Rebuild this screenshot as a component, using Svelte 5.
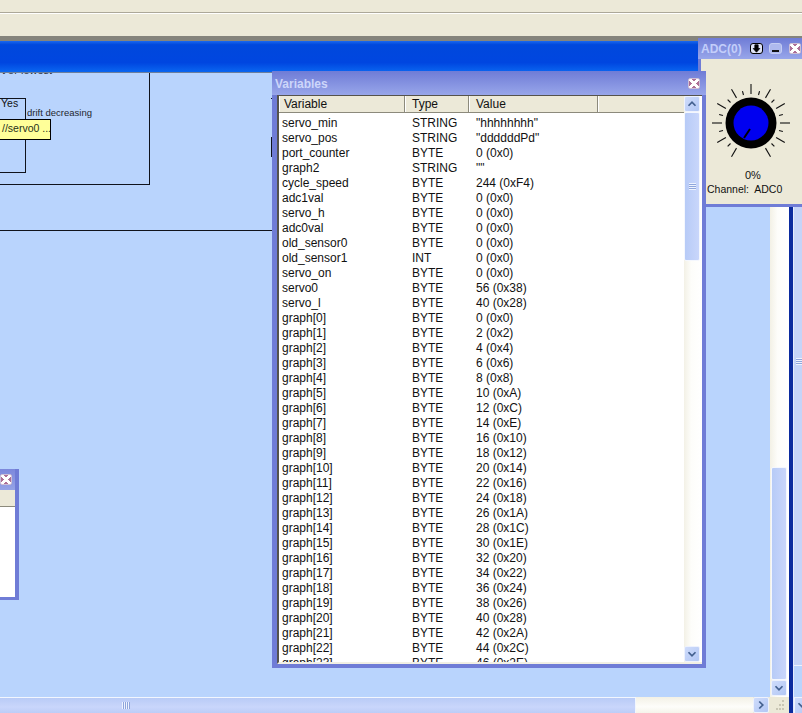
<script>
    const vars = [
        ["servo_min", "STRING", '"hhhhhhhh"'],
        ["servo_pos", "STRING", '"ddddddPd"'],
        ["port_counter", "BYTE", "0 (0x0)"],
        ["graph2", "STRING", '""'],
        ["cycle_speed", "BYTE", "244 (0xF4)"],
        ["adc1val", "BYTE", "0 (0x0)"],
        ["servo_h", "BYTE", "0 (0x0)"],
        ["adc0val", "BYTE", "0 (0x0)"],
        ["old_sensor0", "BYTE", "0 (0x0)"],
        ["old_sensor1", "INT", "0 (0x0)"],
        ["servo_on", "BYTE", "0 (0x0)"],
        ["servo0", "BYTE", "56 (0x38)"],
        ["servo_l", "BYTE", "40 (0x28)"],
    ];
    // graph[n] holds 2*n
    for (let i = 0; i < 24; i++) {
        const v = i * 2;
        vars.push([`graph[${i}]`, "BYTE", `${v} (0x${v.toString(16).toUpperCase()})`]);
    }

    // dial ticks, every 15 degrees, long ones on the 30s
    const ticks = [];
    for (let a = -150; a <= 150; a += 15) {
        const r = (a * Math.PI) / 180;
        const outer = a % 30 === 0 ? 39 : 33;
        ticks.push({
            x1: 52 + 29 * Math.sin(r),
            y1: 65 - 29 * Math.cos(r),
            x2: 52 + outer * Math.sin(r),
            y2: 65 - outer * Math.cos(r),
        });
    }
</script>

<div class="app">
    <div class="toolbar top"></div>
    <div class="toolbar second"></div>
    <div class="title-strip"></div>

    <div class="workspace">
        <div class="main">
            <div class="upper">
                <div class="canvas">
                    <div class="clipped-note">t or lowest</div>
                    <div class="box-outer"></div>
                    <div class="box-inner"><span>Yes</span></div>
                    <div class="drift">drift decreasing</div>
                    <div class="comment">//servo0 ...</div>
                    <div class="rule"></div>
                    <div class="behind-a"></div>
                    <div class="behind-b"></div>

                    <div class="mini-window">
                        <div class="mini-title">
                            <span class="close"></span>
                        </div>
                        <div class="mini-head"></div>
                        <div class="mini-body"></div>
                    </div>
                </div>

                <div class="vscroll">
                    <div class="vtrack">
                        <div class="vthumb"></div>
                    </div>
                    <div class="sbtn">
                        <svg viewBox="0 0 16 16"><path d="M4 6 L8 10 L12 6" /></svg>
                    </div>
                </div>
            </div>

            <div class="hscroll">
                <div class="hthumb"><span class="grip-v"></span></div>
                <div class="htrack"></div>
                <div class="sbtn h">
                    <svg viewBox="0 0 16 16"><path d="M6 4 L10 8 L6 12" /></svg>
                </div>
                <div class="corner">
                    <svg viewBox="0 0 19 16">
                        <rect x="13" y="3" width="2" height="2" />
                        <rect x="10" y="7" width="2" height="2" />
                        <rect x="13" y="7" width="2" height="2" />
                        <rect x="7" y="11" width="2" height="2" />
                        <rect x="10" y="11" width="2" height="2" />
                        <rect x="13" y="11" width="2" height="2" />
                    </svg>
                </div>
            </div>
        </div>

        <div class="divider"></div>

        <div class="side">
            <div class="side-thumb"><span class="grip-h"></span></div>
            <div class="side-gap"></div>
            <div class="side-btn">
                <svg viewBox="0 0 16 16"><path d="M4 6 L8 10 L12 6" /></svg>
            </div>
        </div>
    </div>

    <div class="adc">
        <div class="adc-title">
            <span class="adc-name">ADC(0)</span>
            <span class="adc-btn pin">
                <svg viewBox="0 0 13 11"><path d="M6.5 10 L2.5 5.5 H4.5 V1 H8.5 V5.5 H10.5 Z" /></svg>
            </span>
            <span class="adc-btn min"><i></i></span>
            <span class="close"></span>
        </div>
        <div class="adc-body">
            <svg class="dial" width="104" height="130" viewBox="0 0 104 130">
                {#each ticks as t}
                    <line x1={t.x1} y1={t.y1} x2={t.x2} y2={t.y2} />
                {/each}
                <circle cx="52" cy="65" r="25.5" fill="#000" />
                <circle cx="52" cy="65" r="17.5" fill="#0000f0" />
                <line class="pointer" x1="51" y1="71" x2="45" y2="80" />
            </svg>
            <div class="percent">0%</div>
            <div class="channel">Channel:&nbsp; ADC0</div>
        </div>
    </div>

    <div class="vars">
        <div class="vars-title">
            <span>Variables</span>
            <span class="close"></span>
        </div>
        <div class="vars-inner">
            <div class="list">
                <div class="head">
                    <div class="col c1">Variable</div>
                    <div class="col c2">Type</div>
                    <div class="col c3">Value</div>
                    <div class="col c4"></div>
                </div>
                <div class="rows">
                    {#each vars as row}
                        <div class="row">
                            <span class="c1">{row[0]}</span>
                            <span class="c2">{row[1]}</span>
                            <span class="c3">{row[2]}</span>
                        </div>
                    {/each}
                </div>
            </div>
            <div class="list-scroll">
                <div class="sbtn">
                    <svg viewBox="0 0 16 16"><path d="M4 10 L8 6 L12 10" /></svg>
                </div>
                <div class="list-thumb"><span class="grip-h"></span></div>
                <div class="list-track"></div>
                <div class="sbtn">
                    <svg viewBox="0 0 16 16"><path d="M4 6 L8 10 L12 6" /></svg>
                </div>
            </div>
        </div>
    </div>
</div>

<style>
    :global(body) {
        margin: 0;
        background: #ece9d8;
    }
    .app {
        position: relative;
        width: 802px;
        height: 713px;
        overflow: hidden;
        display: flex;
        flex-direction: column;
        font-family: "Liberation Sans", Arial, sans-serif;
        font-size: 12px;
        color: #111;
    }
    .toolbar {
        background: #ece9d8;
        flex: none;
    }
    .toolbar.top {
        height: 12px;
        border-bottom: 1px solid #aca899;
    }
    .toolbar.second {
        height: 22px;
        border-top: 1px solid #fff;
        border-bottom: 5px solid #85847c;
    }
    .title-strip {
        flex: none;
        height: 31px;
        background: linear-gradient(#1a68ee 0, #0048dc 12%, #0046e0 70%, #0a66f0 100%);
        border-bottom: 1px solid #6d7f9c;
    }
    .workspace {
        flex: 1;
        display: flex;
        min-height: 0;
    }
    .main {
        flex: none;
        width: 789px;
        display: flex;
        flex-direction: column;
    }
    .upper {
        flex: 1;
        display: flex;
        min-height: 0;
    }
    .canvas {
        position: relative;
        width: 770px;
        background: #b9d4fd;
        overflow: hidden;
        flex: none;
    }
    /* diagram shapes on the canvas: y offsets are from 73 */
    .clipped-note {
        position: absolute;
        left: 2px;
        top: -9px;
        font-size: 11px;
        line-height: 13px;
        color: #2b2f3a;
    }
    .box-outer {
        position: absolute;
        left: -2px;
        top: -2px;
        width: 150px;
        height: 112px;
        border: 1px solid #10131c;
    }
    .box-inner {
        position: absolute;
        left: -2px;
        top: 25px;
        width: 26px;
        height: 73px;
        border: 1px solid #10131c;
    }
    .box-inner span {
        position: absolute;
        left: 2px;
        top: -3px;
        font-size: 10.5px;
        line-height: 15px;
    }
    .drift {
        position: absolute;
        left: 27px;
        top: 33px;
        font-size: 9.5px;
        line-height: 14px;
        color: #23272f;
        white-space: nowrap;
    }
    .comment {
        position: absolute;
        left: -1px;
        top: 46px;
        width: 48px;
        height: 19px;
        background: #ffff99;
        border: 1px solid #000;
        font-size: 10.5px;
        line-height: 17px;
        padding-left: 2px;
        color: #26301a;
        white-space: nowrap;
        overflow: hidden;
    }
    .rule {
        position: absolute;
        left: 0;
        top: 157px;
        width: 273px;
        height: 1px;
        background: #10131c;
    }
    .behind-a {
        position: absolute;
        left: 271px;
        top: 25px;
        width: 2px;
        height: 1px;
        background: #10131c;
    }
    .behind-b {
        position: absolute;
        left: 271px;
        top: 64px;
        width: 2px;
        height: 20px;
        background: #10131c;
    }
    .mini-window {
        position: absolute;
        left: -10px;
        top: 396px;
        width: 29px;
        height: 131px;
        background: #6f7cd6;
        box-sizing: border-box;
        border-right: 4px solid #6f7cd6;
        border-bottom: 3px solid #6f7cd6;
        display: flex;
        flex-direction: column;
    }
    .mini-title {
        height: 21px;
        flex: none;
        display: flex;
        justify-content: flex-end;
        align-items: center;
        padding-right: 3px;
        background: linear-gradient(#7c88dc, #95a3e6);
    }
    .mini-head {
        height: 17px;
        flex: none;
        background: #ece9d8;
        border-bottom: 1px solid #8c8a7c;
        box-sizing: border-box;
    }
    .mini-body {
        flex: 1;
        background: #fff;
    }
    .close {
        display: block;
        flex: none;
        width: 12px;
        height: 11px;
        box-sizing: border-box;
        border: 1px solid #cdbfd6;
        border-radius: 2px;
        background-color: #ad6f96;
        background-image:
            linear-gradient(42deg, transparent 40%, #fff 40%, #fff 60%, transparent 60%),
            linear-gradient(-42deg, transparent 40%, #fff 40%, #fff 60%, transparent 60%);
    }
    .vscroll {
        flex: 1;
        display: flex;
        flex-direction: column;
        background: linear-gradient(90deg, #f3f1e6, #fdfdfa 40%, #fff);
    }
    .vtrack {
        flex: 1;
        padding-top: 394px;
        min-height: 0;
        box-sizing: border-box;
    }
    .vthumb {
        height: 100%;
        width: 16px;
        margin-left: 1px;
        box-sizing: border-box;
        border: 1px solid #f4f7fe;
        border-radius: 2px;
        background: linear-gradient(90deg, #b7cbf7, #c9d6fb);
    }
    .sbtn {
        flex: none;
        width: 16px;
        height: 16px;
        box-sizing: border-box;
        border: 1px solid #eef2fd;
        border-radius: 2px;
        background: linear-gradient(135deg, #cfdcfb, #b2c7f5);
    }
    .sbtn svg,
    .side-btn svg {
        display: block;
        width: 14px;
        height: 14px;
    }
    .sbtn path,
    .side-btn path {
        fill: none;
        stroke: #43608f;
        stroke-width: 2;
    }
    .vscroll .sbtn {
        margin: 0 0 1px 1px;
    }
    .divider {
        flex: none;
        width: 4px;
        background: #0a2a9e;
    }
    .side {
        flex: 1;
        display: flex;
        flex-direction: column;
        border-left: 1px solid #e4ebfc;
        background: #b9d4fd;
    }
    .side-thumb {
        flex: none;
        height: 593px;
        box-sizing: border-box;
        padding: 285px 0 0 2px;
        background: #c5d4f8;
        border-bottom: 1px solid #eef2fd;
    }
    .side-gap {
        flex: 1;
    }
    .side-btn {
        flex: none;
        height: 16px;
        background: linear-gradient(135deg, #cfdcfb, #b2c7f5);
        border-top: 1px solid #eef2fd;
        border-left: 1px solid #eef2fd;
        box-sizing: border-box;
    }
    .grip-h {
        display: block;
        width: 7px;
        height: 7px;
        background: repeating-linear-gradient(#eef3fe 0 1px, #8fa6dc 1px 2px);
    }
    .hscroll {
        flex: none;
        height: 16px;
        display: flex;
        background: #ece9d8;
    }
    .hthumb {
        width: 636px;
        flex: none;
        box-sizing: border-box;
        border-top: 1px solid #f2f6fe;
        border-right: 1px solid #f2f6fe;
        background: linear-gradient(#b9cbf6, #c9d6fb 60%, #bccdf7);
        display: flex;
        align-items: center;
        padding-left: 122px;
    }
    .grip-v {
        display: block;
        width: 8px;
        height: 7px;
        background: repeating-linear-gradient(90deg, #eef3fe 0 1px, #8fa6dc 1px 2px);
    }
    .htrack {
        flex: 1;
        background: linear-gradient(#f3f1e6, #fdfdfa 60%, #f5f4ea);
    }
    .corner {
        flex: none;
        width: 20px;
        background: #ece9d8;
    }
    .corner svg {
        display: block;
        width: 19px;
        height: 16px;
    }
    .corner rect {
        fill: #c9c6b4;
    }
    .adc {
        position: absolute;
        left: 698px;
        top: 38px;
        width: 110px;
        height: 169px;
        box-sizing: border-box;
        background: #6f7cd6;
        border-left: 3px solid #6f7cd6;
        border-bottom: 3px solid #6f7cd6;
        display: flex;
        flex-direction: column;
    }
    .adc-title {
        flex: none;
        height: 21px;
        display: flex;
        align-items: center;
        margin-left: -3px;
        padding-left: 3px;
        background: linear-gradient(#6f7cd6, #98a6ea);
    }
    .adc-name {
        width: 49px;
        color: #c3cefa;
        font-size: 12px;
        font-weight: bold;
        white-space: nowrap;
    }
    .adc-btn {
        display: block;
        flex: none;
        width: 13px;
        height: 11px;
        margin-right: 6px;
        box-sizing: border-box;
        border-radius: 3px;
    }
    .adc-btn.pin {
        background: #dfe3f6;
        border: 1px solid #000;
    }
    .adc-btn.pin svg {
        display: block;
        width: 100%;
        height: 100%;
    }
    .adc-btn.pin path {
        fill: #000;
        stroke: #000;
    }
    .adc-btn.min {
        background: #aeb9ee;
        border: 1px solid #c4cdf3;
        position: relative;
        margin-right: 7px;
    }
    .adc-btn.min i {
        position: absolute;
        left: 2px;
        right: 2px;
        bottom: 1px;
        height: 2px;
        background: #111;
    }
    .adc-body {
        flex: 1;
        background: #ece9d8;
        position: relative;
    }
    .dial {
        position: absolute;
        left: -2px;
        top: -1px;
    }
    .dial line {
        stroke: #111;
        stroke-width: 1.1;
    }
    .dial .pointer {
        stroke: #000;
        stroke-width: 2;
    }
    .percent {
        position: absolute;
        left: 44px;
        top: 110px;
        font-size: 11px;
        line-height: 13px;
    }
    .channel {
        position: absolute;
        left: 6px;
        top: 123px;
        font-size: 10.5px;
        line-height: 14px;
        white-space: nowrap;
    }
    .vars {
        position: absolute;
        left: 272px;
        top: 71px;
        width: 434px;
        height: 597px;
        box-sizing: border-box;
        background: #6f7cd6;
        border: 4px solid #6f7cd6;
        border-left-width: 5px;
        border-top: 0;
        display: flex;
        flex-direction: column;
    }
    .vars-title {
        flex: none;
        height: 24px;
        margin: 0 -4px 0 -5px;
        padding: 1px 6px 0 3px;
        box-sizing: border-box;
        display: flex;
        justify-content: space-between;
        align-items: center;
        background: linear-gradient(#6f7cd6, #98a6ea);
        color: #cdd6fa;
        font-size: 12px;
        font-weight: bold;
    }
    .vars-inner {
        flex: 1;
        min-height: 0;
        display: flex;
        background: #fff;
        border-left: 2px solid #55534c;
        border-bottom: 2px solid #f1efe4;
        border-top: 1px solid #55534c;
    }
    .list {
        flex: 1;
        min-width: 0;
        overflow: hidden;
    }
    .head {
        height: 17px;
        display: flex;
        background: #ece9d8;
        border-bottom: 1px solid #8c8a7c;
        box-sizing: border-box;
    }
    .col {
        box-sizing: border-box;
        padding-left: 4px;
        border-right: 1px solid #8c8a7c;
        border-left: 1px solid #fff;
        line-height: 16px;
    }
    .col.c1 {
        width: 126px;
    }
    .col.c2 {
        width: 64px;
        padding-left: 6px;
    }
    .col.c3 {
        width: 129px;
        padding-left: 6px;
    }
    .col.c4 {
        flex: 1;
        border-right: 0;
    }
    .rows {
        padding-top: 3px;
    }
    .row {
        display: flex;
        height: 15px;
        line-height: 15px;
        white-space: nowrap;
    }
    .row .c1 {
        width: 133px;
        padding-left: 3px;
        box-sizing: border-box;
    }
    .row .c2 {
        width: 64px;
    }
    .row .c3 {
        flex: 1;
    }
    .list-scroll {
        flex: none;
        width: 18px;
        display: flex;
        flex-direction: column;
        background: linear-gradient(90deg, #f3f1e6, #fdfdfa 40%, #fff);
    }
    .list-thumb {
        flex: none;
        height: 149px;
        width: 16px;
        box-sizing: border-box;
        border: 1px solid #f4f7fe;
        border-radius: 2px;
        background: linear-gradient(90deg, #b7cbf7, #c9d6fb);
        display: flex;
        align-items: center;
        justify-content: center;
    }
    .list-track {
        flex: 1;
    }
</style>
